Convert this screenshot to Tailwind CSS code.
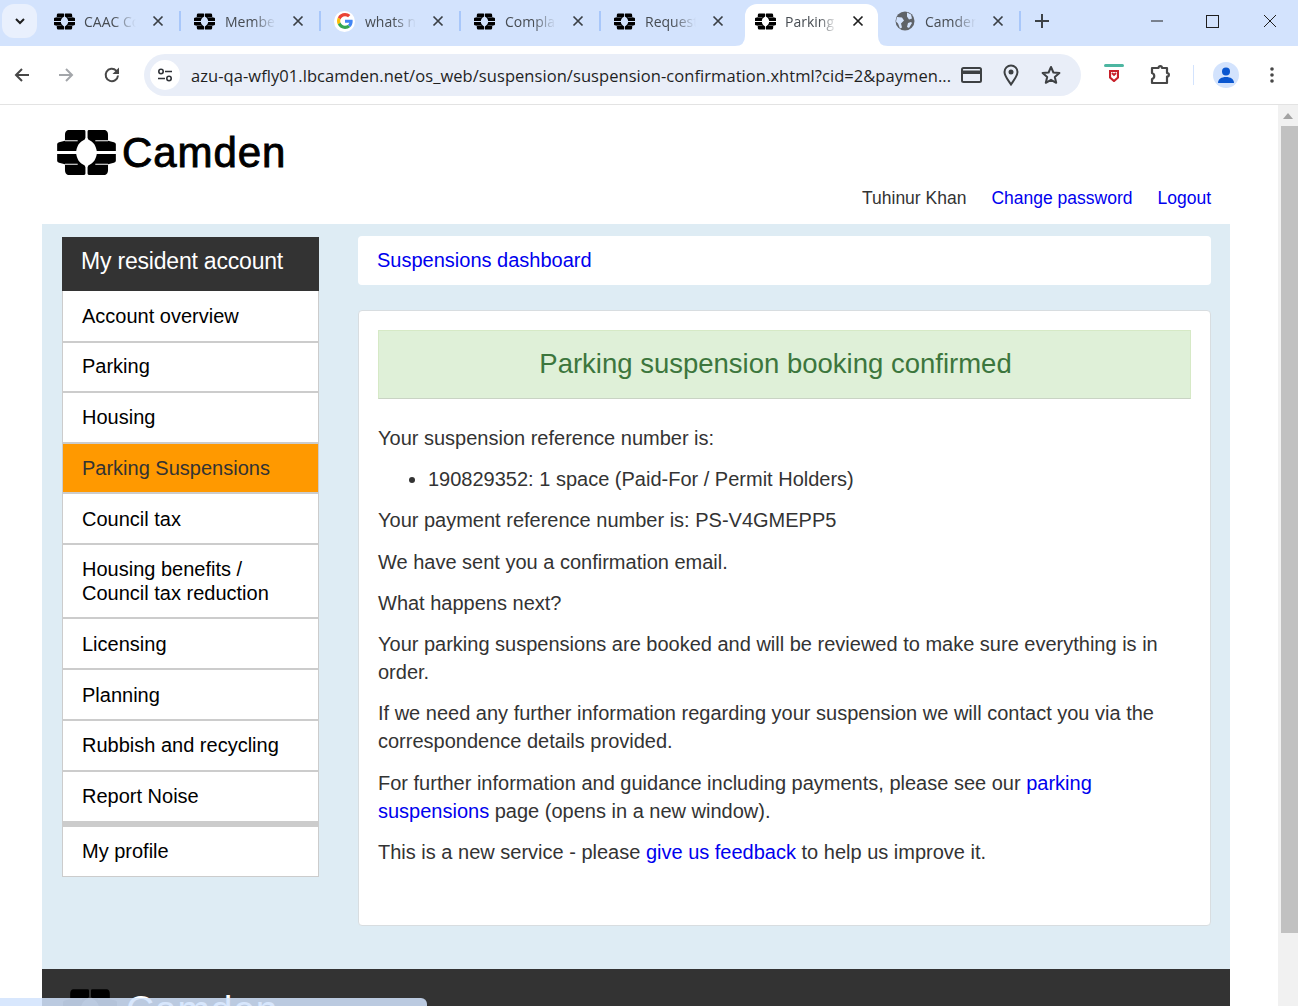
<!DOCTYPE html>
<html lang="en">
<head>
<meta charset="utf-8">
<title>Parking suspension booking confirmed</title>
<script src="https://cdn.jsdelivr.net/npm/@tailwindcss/browser@4"></script>
</head>
<body class="relative h-[1006px] w-[1298px] overflow-hidden bg-white font-['Liberation_Sans',Arial,sans-serif]">
<svg class="hidden" width="0" height="0" aria-hidden="true">
  <symbol id="cam" viewBox="0 0 60 46">
    <g id="q"><path d="M11 0H27.500Q28.900 0 28.900 1.500V8Q28.900 10 26 11C22.500 13 20.500 16 19.500 21.500H0V14.500Q0 13 2 12.500L8 11V5Q8 1 11 0Z"/><rect x="8" y="10.500" width="13" height="1" fill="var(--cut,#fff)"/></g>
    <use href="#q" transform="matrix(-1 0 0 1 60 0)"/>
    <use href="#q" transform="matrix(1 0 0 -1 0 46)"/>
    <use href="#q" transform="matrix(-1 0 0 -1 60 46)"/>
  </symbol>
  <symbol id="x" viewBox="0 0 12 12"><path d="M1.500 1.500L10.500 10.500M10.500 1.500L1.500 10.500" fill="none" stroke="currentColor" stroke-width="1.700"/></symbol>
</svg>

<!-- Tab strip -->
<div class="relative flex h-[46px] items-start bg-[#d3e3fd] font-['Open_Sans',sans-serif] text-[14px] text-[#474c52]">
  <div class="ml-[2px] mt-[4px] flex h-[34px] w-[35px] flex-none items-center justify-center rounded-xl bg-[#e9f0fd]"><svg width="10" height="7" viewBox="0 0 10 7"><path d="M1 1l4 4 4-4" fill="none" stroke="#1f1f1f" stroke-width="2"/></svg></div>
  <div class="ml-[4px] flex">
    <div class="flex h-[42px] w-[140px] items-center pl-[13px]">
      <svg class="h-[17px] w-[21px] flex-none text-[#1f2328] [--cut:#d3e3fd]"><use href="#cam"/></svg>
      <span class="ml-[9px] w-[52px] overflow-hidden whitespace-nowrap [mask-image:linear-gradient(to_right,black_55%,transparent)]">CAAC Cor</span>
      <svg class="ml-[16px] h-[12px] w-[12px] flex-none text-[#3a3f45]"><use href="#x"/></svg>
      <span class="ml-[15px] h-[20px] w-[2px] flex-none bg-[#a8c7fa]"></span>
    </div>
    <div class="flex h-[42px] w-[140px] items-center pl-[13px]">
      <svg class="h-[17px] w-[21px] flex-none text-[#1f2328] [--cut:#d3e3fd]"><use href="#cam"/></svg>
      <span class="ml-[10px] w-[51px] overflow-hidden whitespace-nowrap [mask-image:linear-gradient(to_right,black_55%,transparent)]">Members</span>
      <svg class="ml-[16px] h-[12px] w-[12px] flex-none text-[#3a3f45]"><use href="#x"/></svg>
      <span class="ml-[15px] h-[20px] w-[2px] flex-none bg-[#a8c7fa]"></span>
    </div>
    <div class="flex h-[42px] w-[140px] items-center pl-[13px]">
      <span class="flex h-[21px] w-[21px] flex-none items-center justify-center rounded-full bg-white">
        <svg width="16" height="16" viewBox="0 0 48 48"><path fill="#EA4335" d="M24 9.500c3.500 0 6.700 1.200 9.200 3.600l6.900-6.900C35.900 2.400 30.500 0 24 0 14.600 0 6.500 5.400 2.600 13.200l8 6.200C12.400 13.700 17.700 9.500 24 9.500z"/><path fill="#4285F4" d="M47 24.500c0-1.600-.1-3.100-.4-4.500H24v9h13c-.6 3-2.200 5.500-4.800 7.200l7.700 6C44.400 38 47 31.800 47 24.500z"/><path fill="#FBBC05" d="M10.500 28.600c-.5-1.400-.8-3-.8-4.600s.3-3.200.8-4.600l-8-6.200C.9 16.400 0 20.100 0 24s.9 7.600 2.600 10.800l7.900-6.200z"/><path fill="#34A853" d="M24 48c6.500 0 11.900-2.100 15.900-5.800l-7.700-6c-2.200 1.400-4.900 2.300-8.200 2.300-6.300 0-11.600-4.200-13.500-9.900l-8 6.200C6.500 42.600 14.600 48 24 48z"/></svg>
      </span>
      <span class="ml-[10px] w-[51px] overflow-hidden whitespace-nowrap [mask-image:linear-gradient(to_right,black_55%,transparent)]">whats new</span>
      <svg class="ml-[16px] h-[12px] w-[12px] flex-none text-[#3a3f45]"><use href="#x"/></svg>
      <span class="ml-[15px] h-[20px] w-[2px] flex-none bg-[#a8c7fa]"></span>
    </div>
    <div class="flex h-[42px] w-[140px] items-center pl-[13px]">
      <svg class="h-[17px] w-[21px] flex-none text-[#1f2328] [--cut:#d3e3fd]"><use href="#cam"/></svg>
      <span class="ml-[10px] w-[51px] overflow-hidden whitespace-nowrap [mask-image:linear-gradient(to_right,black_55%,transparent)]">Complaint</span>
      <svg class="ml-[16px] h-[12px] w-[12px] flex-none text-[#3a3f45]"><use href="#x"/></svg>
      <span class="ml-[15px] h-[20px] w-[2px] flex-none bg-[#a8c7fa]"></span>
    </div>
    <div class="flex h-[42px] w-[140px] items-center pl-[13px]">
      <svg class="h-[17px] w-[21px] flex-none text-[#1f2328] [--cut:#d3e3fd]"><use href="#cam"/></svg>
      <span class="ml-[10px] w-[51px] overflow-hidden whitespace-nowrap [mask-image:linear-gradient(to_right,black_55%,transparent)]">Requests</span>
      <svg class="ml-[16px] h-[12px] w-[12px] flex-none text-[#3a3f45]"><use href="#x"/></svg>
    </div>
    <div class="relative ml-[4px] mt-[4px] flex h-[42px] w-[133px] items-center rounded-t-xl bg-white pb-[8px] pl-[10px]">
      <svg class="absolute bottom-0 left-[-10px] h-[10px] w-[10px]" viewBox="0 0 10 10"><path d="M10 0V10H0Q10 10 10 0Z" fill="#fff"/></svg>
      <svg class="absolute bottom-0 right-[-10px] h-[10px] w-[10px]" viewBox="0 0 10 10"><path d="M0 0V10H10Q0 10 0 0Z" fill="#fff"/></svg>
      <svg class="h-[17px] w-[21px] flex-none text-[#1d8a5f]"><use href="#cam"/></svg>
      <span class="ml-[9px] w-[52px] overflow-hidden whitespace-nowrap [mask-image:linear-gradient(to_right,black_65%,transparent)]">Parking</span>
      <svg class="ml-[15px] h-[12px] w-[12px] flex-none text-[#1f1f1f]"><use href="#x"/></svg>
    </div>
    <div class="flex h-[42px] w-[143px] items-center pl-[17px]">
      <svg class="h-[20px] w-[20px] flex-none" viewBox="0 0 20 20"><circle cx="10" cy="10" r="9.500" fill="#5f6368"/><path d="M2 6l5 .5 2 3-3 3 1 4-2 1-2-5-2-2zM12 1.500l4 2 1 4-3 1-2-3zM13 12l3-1 1 1-3 5-2-1z" fill="#d3e3fd"/></svg>
      <span class="ml-[10px] w-[52px] overflow-hidden whitespace-nowrap [mask-image:linear-gradient(to_right,black_55%,transparent)]">Camden</span>
      <svg class="ml-[16px] h-[12px] w-[12px] flex-none text-[#3a3f45]"><use href="#x"/></svg>
      <span class="ml-[15px] h-[20px] w-[2px] flex-none bg-[#a8c7fa]"></span>
    </div>
  </div>
  <svg class="ml-[14px] mt-[14px] h-[14px] w-[14px] flex-none" viewBox="0 0 14 14"><path d="M7 0V14M0 7H14" stroke="#3d4247" stroke-width="2"/></svg>
  <div class="ml-auto mr-[21px] mt-[14px] flex items-center">
    <svg width="14" height="14" viewBox="0 0 14 14"><path d="M1 7H13" stroke="#1f1f1f"/></svg>
    <svg class="ml-[42px]" width="13" height="13" viewBox="0 0 13 13"><rect x=".5" y=".5" width="12" height="12" fill="none" stroke="#1f1f1f"/></svg>
    <svg class="ml-[44px]" width="14" height="14" viewBox="0 0 14 14"><path d="M1 1L13 13M13 1L1 13" stroke="#1f1f1f"/></svg>
  </div>
</div>

<!-- Toolbar -->
<div class="flex h-[59px] items-center rounded-tr-lg border-b border-[#e3e3e3] bg-white pl-[14px] text-[#474747]">
  <svg class="h-[16px] w-[16px] flex-none" viewBox="0 0 16 16"><path d="M15 8H2M8 2L2 8l6 6" fill="none" stroke="#474747" stroke-width="2"/></svg>
  <svg class="ml-[28px] h-[16px] w-[16px] flex-none" viewBox="0 0 16 16"><path d="M1 8H14M8 2l6 6-6 6" fill="none" stroke="#a3a6aa" stroke-width="2"/></svg>
  <svg class="ml-[29px] h-[18px] w-[18px] flex-none" viewBox="0 0 18 18"><path d="M15 9.500A6.200 6.200 0 1 1 13.200 4.600L15.500 7" fill="none" stroke="#474747" stroke-width="2"/><path d="M16 1.500V8H9.500z" fill="#474747"/></svg>
  <div class="ml-[23px] flex h-[42px] w-[937px] flex-none items-center rounded-full bg-[#e9eef8] pl-[6px]">
    <span class="flex h-[30px] w-[30px] flex-none items-center justify-center rounded-full bg-white">
      <svg width="16" height="16" viewBox="0 0 16 16"><g fill="none" stroke="#303338" stroke-width="1.600"><circle cx="4" cy="4.500" r="2.200"/><path d="M8 4.500H15M1 11.500H8"/><circle cx="12" cy="11.500" r="2.200"/></g></svg>
    </span>
    <span class="ml-[11px] w-[762px] flex-none whitespace-nowrap pt-[2px] font-['Open_Sans',sans-serif] text-[16.500px] tracking-[0.06px] text-[#1f1f1f]">azu-qa-wfly01.lbcamden.net/os_web/suspension/suspension-confirmation.xhtml?cid=2&amp;paymen...</span>
    <svg class="ml-[8px] h-[16px] w-[21px] flex-none" viewBox="0 0 21 16"><rect x="1" y="1" width="19" height="14" rx="1.500" fill="none" stroke="#3d4043" stroke-width="2"/><rect x="1" y="3.500" width="19" height="3.500" fill="#3d4043"/></svg>
    <svg class="ml-[21px] h-[22px] w-[16px] flex-none" viewBox="0 0 16 22"><path d="M8 20.500C5 16 1.500 12 1.500 8a6.500 6.500 0 0 1 13 0C14.500 12 11 16 8 20.500Z" fill="none" stroke="#3d4043" stroke-width="2"/><circle cx="8" cy="8" r="2.500" fill="#3d4043"/></svg>
    <svg class="ml-[22px] h-[20px] w-[20px] flex-none" viewBox="0 0 20 20"><path d="M10 2l2.400 5.500 6 .5-4.600 3.900 1.400 5.900L10 14.800l-5.200 3 1.400-5.900L1.600 8l6-.5z" fill="none" stroke="#3d4043" stroke-width="2" stroke-linejoin="round"/></svg>
  </div>
  <div class="mb-[2px] ml-[23px] flex h-[20px] w-[20px] flex-none flex-col items-center">
    <span class="h-[3px] w-[20px] rounded-sm bg-[#4cb6a1]"></span>
    <svg class="mt-[3px]" width="10" height="12" viewBox="0 0 10 12"><path d="M1 1h8v6.500L5 11 1 7.500z" fill="none" stroke="#c8202a" stroke-width="2.200"/><path d="M3 3l2 2 2-2" fill="none" stroke="#c8202a" stroke-width="1.800"/></svg>
  </div>
  <svg class="ml-[25px] h-[22px] w-[22px] flex-none" viewBox="0 0 22 22"><path d="M3 4H9.500C9.500 1.500 13 1.500 13 4H18V9C20.500 9 20.500 12.500 18 12.500V19H3V15C6 14 6 10 3 9Z" fill="none" stroke="#474747" stroke-width="2.200" stroke-linejoin="round"/></svg>
  <span class="ml-[22px] h-[20px] w-[1px] flex-none bg-[#d3e3fd]"></span>
  <span class="ml-[19px] flex h-[26px] w-[26px] flex-none items-center justify-center rounded-full bg-[#d3e3fd]">
    <svg width="16" height="16" viewBox="0 0 16 16"><circle cx="8" cy="4.500" r="4" fill="#0b57d0"/><path d="M0 16c0-4 3.500-6 8-6s8 2 8 6z" fill="#0b57d0"/></svg>
  </span>
  <svg class="ml-[31px] h-[16px] w-[4px] flex-none" viewBox="0 0 4 16"><circle cx="2" cy="2" r="1.800" fill="#474747"/><circle cx="2" cy="8" r="1.800" fill="#474747"/><circle cx="2" cy="14" r="1.800" fill="#474747"/></svg>
</div>

<!-- Viewport -->
<div class="flex h-[901px]">
  <div class="w-[1278px] flex-none">
    <header class="relative h-[119px]">
      <div class="ml-[57px] flex items-center pt-[25px] text-black">
        <svg class="h-[45px] w-[59px] flex-none"><use href="#cam"/></svg>
        <span class="ml-[6px] text-[42px] leading-[45px] tracking-[0.9px] [-webkit-text-stroke:0.9px_black]">Camden</span>
      </div>
      <nav class="absolute right-[67px] top-[82px] flex gap-[25px] text-[17.500px] leading-[22px] text-[#0000ee]">
        <span class="text-[#333]">Tuhinur Khan</span>
        <a href="#">Change password</a>
        <a href="#">Logout</a>
      </nav>
    </header>
    <main class="ml-[42px] flex h-[745px] w-[1188px] items-start bg-[#deecf4] pl-[20px] pt-[12px]">
      <aside class="mt-[1px] w-[257px] flex-none text-[20px] leading-[24px] text-black">
        <div class="flex h-[54px] items-center bg-[#333] pb-[6px] pl-[19px] text-[23px] tracking-[-0.2px] text-white">My resident account</div>
        <div class="border-x border-b border-[#ccc] bg-white">
          <div class="flex h-[52px] items-center border-b-[2px] border-[#ccc] pl-[19px]">Account overview</div>
          <div class="flex h-[50px] items-center border-b-[2px] border-[#ccc] pb-[2px] pl-[19px]">Parking</div>
          <div class="flex h-[51px] items-center border-b-[2px] border-[#ccc] pb-[2px] pl-[19px]">Housing</div>
          <div class="flex h-[50px] items-center border-b-[2px] border-[#ccc] bg-[#ff9900] pl-[19px] text-[#333]">Parking Suspensions</div>
          <div class="flex h-[51px] items-center border-b-[2px] border-[#ccc] pl-[19px]">Council tax</div>
          <div class="flex h-[74px] items-center border-b-[2px] border-[#ccc] pl-[19px]">Housing benefits /<br>Council tax reduction</div>
          <div class="flex h-[51px] items-center border-b-[2px] border-[#ccc] pl-[19px]">Licensing</div>
          <div class="flex h-[51px] items-center border-b-[2px] border-[#ccc] pl-[19px]">Planning</div>
          <div class="flex h-[51px] items-center border-b-[2px] border-[#ccc] pb-[1px] pl-[19px]">Rubbish and recycling</div>
          <div class="flex h-[55px] items-center border-b-[6px] border-[#ccc] pb-[1px] pl-[19px]">Report Noise</div>
          <div class="flex h-[49px] items-center pb-[1px] pl-[19px]">My profile</div>
        </div>
      </aside>
      <div class="ml-[39px] w-[853px] flex-none">
        <div class="flex h-[49px] items-center rounded-[4px] bg-white pb-[2px] pl-[19px] text-[20px] text-[#0000ee]"><a href="#">Suspensions dashboard</a></div>
        <section class="mt-[25px] h-[616px] rounded-[4px] border border-[#d8dde0] bg-white px-[19px] pt-[19px] text-[20px] leading-[28px] text-[#333]">
          <div class="flex h-[69px] items-center justify-center border border-[#d6e9c6] border-b-[#c9d3c4] bg-[#dff0d8] pb-[2px] pr-[18px] text-[27.500px] text-[#3c763d]">Parking suspension booking confirmed</div>
          <p class="mt-[25px]">Your suspension reference number is:</p>
          <ul class="ml-[50px] mt-[13.200px] list-disc"><li>190829352: 1 space (Paid-For / Permit Holders)</li></ul>
          <p class="mt-[13.200px]">Your payment reference number is: PS-V4GMEPP5</p>
          <p class="mt-[13.200px]">We have sent you a confirmation email.</p>
          <p class="mt-[13.200px]">What happens next?</p>
          <p class="mt-[13.200px]">Your parking suspensions are booked and will be reviewed to make sure everything is in order.</p>
          <p class="mt-[13px]">If we need any further information regarding your suspension we will contact you via the correspondence details provided.</p>
          <p class="mt-[14px]">For further information and guidance including payments, please see our <a href="#" class="text-[#0000ee]">parking suspensions</a> page (opens in a new window).</p>
          <p class="mt-[13px]">This is a new service - please <a href="#" class="text-[#0000ee]">give us feedback</a> to help us improve it.</p>
        </section>
      </div>
    </main>
    <footer class="ml-[42px] h-[37px] w-[1188px] overflow-hidden bg-[#333] text-white">
      <div class="ml-[21px] flex pt-[20px]">
        <svg class="h-[42px] w-[54px] flex-none [--cut:#333]"><use href="#cam"/></svg>
        <span class="ml-[9px] text-[39px] leading-[42px] tracking-[0.8px]">Camden</span>
      </div>
    </footer>
  </div>
  <!-- Scrollbar -->
  <div class="flex w-[20px] flex-none flex-col items-center bg-[#f1f1f1]">
    <svg class="mt-[8px]" width="12" height="6" viewBox="0 0 12 6"><path d="M6 0l5 6H1z" fill="#a3a3a3"/></svg>
    <div class="ml-[2px] mt-[7px] h-[807px] w-[17px] bg-[#c1c1c1]"></div>
  </div>
</div>

<!-- Status bubble -->
<div class="absolute bottom-0 left-0 h-[8px] w-[427px] rounded-tr-md bg-[#d2e3fd]/[0.86]"></div>
</body>
</html>
